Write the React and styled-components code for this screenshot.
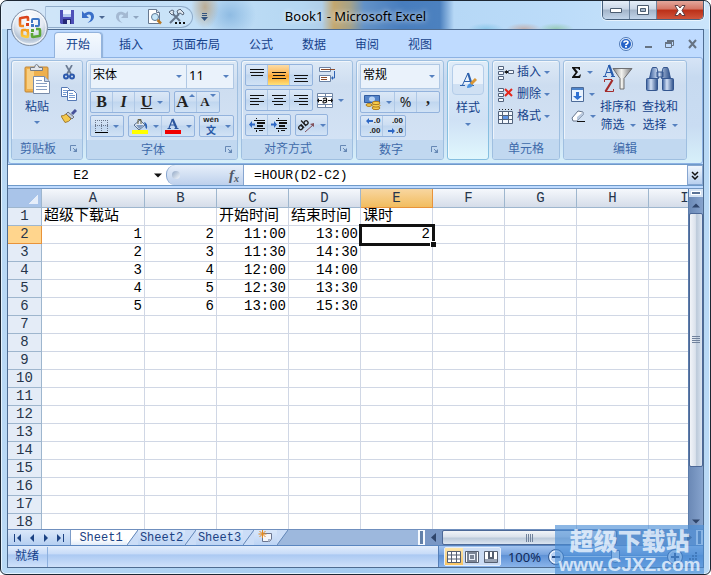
import React from 'react';
import styled, { createGlobalStyle, css } from 'styled-components';

const Global = createGlobalStyle`
  * { box-sizing: border-box; }
  html, body { margin: 0; padding: 0; background: #fff; }
  button, input, select { font: inherit; color: inherit; margin: 0; padding: 0; border: 0; background: none; border-radius: 0; }
  button { cursor: default; }
  svg { display: block; flex: none; }
`;

const cjk = '"Liberation Sans", "Noto Sans CJK SC", sans-serif';
const mono = '"Liberation Mono", "Noto Sans CJK SC", monospace';
const line = '#93b3dd';
const ink = '#15428b';

/* ---------- window frame ---------- */
const Frame = styled.div`
  position: relative;
  display: flex;
  flex-direction: column;
  height: 100vh;
  min-height: 400px;
  padding: 0 6px 6px;
  overflow: hidden;
  border: 1px solid #1d2733;
  border-radius: 7px 7px 6px 6px;
  background: linear-gradient(90deg, #b9d9f5, #a4cbf0 50%, #b9d9f5);
  box-shadow: inset 0 0 0 1px #e6f4ff;
  font: 12px/16px ${cjk};
  color: ${ink};
`;

const TitleBar = styled.header`
  display: grid;
  grid-template-columns: 1fr auto 1fr;
  flex: none;
  height: 28px;
  margin: 0 -5px;
  padding: 0 5px;
  border-radius: 6px 6px 0 0;
  background:
    radial-gradient(ellipse 14px 22px at 203px 6px, #b99f7bcc, #b99f7b00),
    radial-gradient(ellipse 26px 24px at 228px 14px, #83b3decc, #83b3de00),
    radial-gradient(ellipse 18px 6px at 484px 28px, #77bfe3aa, #77bfe300),
    radial-gradient(ellipse 18px 6px at 522px 28px, #c4a79dcc, #c4a79d00),
    radial-gradient(ellipse 18px 6px at 554px 28px, #86c394aa, #86c39400),
    linear-gradient(90deg, #dcebf9 0, #c3dff7 120px, #c3e0f8 185px, #b5d7f2 300px, #b0cfe9 320px, #c4a76e 332px, #a5a289 348px, #6292c8 362px, #477dbe 400px, #4c81bf 438px, #b6d8f6 452px, #bcdcf9 560px, #cbe5fb 100%);
`;

const QuickAccess = styled.div`
  display: flex;
  align-items: center;
  justify-self: start;
  height: 22px;
  margin: 5px 0 0 38px;
  padding: 0 7px 0 13px;
  border: 1px solid #8fabc9;
  border-left-color: #a9c1dc;
  border-radius: 0 12px 12px 0 / 0 11px 11px 0;
  background: rgba(205, 228, 249, 0.6);
`;

const QuickLine = styled.div`
  display: flex;
  gap: 7px;
`;

const IconButton = styled.button`
  display: flex;
  align-items: center;
  justify-content: center;
  flex: none;
  width: ${p => p.$w || 16}px;
  height: ${p => p.$h || 16}px;
  margin-right: ${p => p.$gap || 0}px;
`;

const Title = styled.h1`
  margin: 0;
  padding-top: 6px;
  font: 13px/18px "Noto Sans", sans-serif;
  color: #000;
  text-shadow: 0 0 5px rgba(255, 255, 255, 0.8), 0 0 8px rgba(255, 255, 255, 0.5);
`;

const WindowButtons = styled.div`
  display: flex;
  justify-self: end;
  height: 19px;
  overflow: hidden;
  border: 1px solid #47607c;
  border-top: 0;
  border-radius: 0 0 5px 5px;
  box-shadow: 0 0 0 1px rgba(255, 255, 255, 0.6);
`;

const WindowButton = styled.button`
  display: flex;
  align-items: center;
  justify-content: center;
  width: ${p => (p.$close ? 46 : 27)}px;
  border-right: 1px solid #6d849f;
  background: ${p =>
    p.$close
      ? 'linear-gradient(#e3a79c, #d47565 45%, #bb2f17 50%, #d0553c)'
      : 'linear-gradient(#e6eff9, #c9d6e6 45%, #a3b4c9 50%, #c2d5ea)'};
  &:last-child { border-right: 0; }
`;

const Orb = styled.button`
  position: absolute;
  left: 10px;
  top: 8px;
  z-index: 2;
`;

const AppBody = styled.main`
  display: flex;
  flex-direction: column;
  flex: 1;
  min-height: 0;
  border: 1px solid #4e6c91;
  background: #bfdbff;
`;

/* ---------- ribbon ---------- */
const TabRow = styled.nav`
  display: flex;
  align-items: flex-end;
  flex: none;
  gap: 5px;
  height: 27px;
  padding: 0 3px 0 46px;
`;

const RibbonTab = styled.button`
  height: 25px;
  padding: 0 11px 1px;
  border: 1px solid transparent;
  border-bottom: 0;
  border-radius: 4px 4px 0 0;
  color: ${ink};
  ${p => p.$on && css`
    position: relative;
    z-index: 1;
    margin-bottom: -1px;
    height: 26px;
    border-color: #93b3dd;
    background: linear-gradient(#f5f9fe, #e3eefb);
    box-shadow: 1px 0 1px #8fb0d8;
  `}
`;

const DocButtons = styled.div`
  display: flex;
  gap: 6px;
  margin-left: auto;
  padding-bottom: 5px;
`;

const RibbonPanel = styled.div`
  display: flex;
  flex: none;
  gap: 3px;
  height: 107px;
  padding: 2px 2px 3px;
  border: 1px solid #8db2e3;
  border-radius: 3px;
  background: linear-gradient(#d6e4f6, #c7daf0 18%, #c9dcf2 65%, #d7f0fa);
`;

const GroupBox = styled.section`
  display: flex;
  flex-direction: column;
  flex: none;
  width: ${p => p.$w}px;
  overflow: hidden;
  border: 1px solid ${p => (p.$plain ? '#86bfe0' : '#9fbfe0')};
  border-radius: 3px;
  background: ${p => p.$plain ? 'linear-gradient(#dfecf8, #cfe1f5 60%, #e0f7fd)' : 'linear-gradient(#dde9f6, #cdddf0 25%, #d5e4f6)'};
  box-shadow: inset 1px 1px 0 rgba(255, 255, 255, 0.6);
`;

const GroupBody = styled.div`
  display: flex;
  flex: 1;
  flex-direction: ${p => (p.$row ? 'row' : 'column')};
  gap: 2px;
  padding: 3px;
`;

const GroupLabel = styled.div`
  display: flex;
  flex: none;
  align-items: center;
  height: 20px;
  padding: 0 4px;
  background: #c1d8f0;
  color: #3e6aaa;
`;

const LabelText = styled.span`
  flex: 1;
  text-align: center;
  white-space: nowrap;
  padding-right: ${p => (p.$end ? 10 : 0)}px;
`;

const Controls = styled.div`
  display: flex;
  align-items: center;
  gap: 4px;
`;

const Strip = styled.div`
  display: flex;
  flex: none;
  height: 22px;
  overflow: hidden;
  border: 1px solid ${line};
  border-radius: 2px;
  background: linear-gradient(#dbe8f7, #cddef2 45%, #c0d6ef 50%, #d1e2f5);
`;

const StripButton = styled.button`
  display: flex;
  align-items: center;
  justify-content: center;
  gap: 5px;
  width: ${p => p.$w || 22}px;
  padding-bottom: ${p => p.$lift || 0}px;
  border-right: 1px solid #afc8e6;
  color: #222;
  font: ${p => p.$font || 'bold 16px/18px "Liberation Serif", serif'};
  background: ${p => (p.$on ? 'linear-gradient(#fbdca6, #fdb654 45%, #fba42f 55%, #fee27c)' : 'none')};
  &:last-child { border-right: 0; }
`;

const ComboWrap = styled.label`
  display: flex;
  flex: none;
  align-items: center;
  width: ${p => p.$w}px;
  height: 25px;
  padding-right: 4px;
  border: 1px solid #b0c8e4;
  background: #eaf2fb;
  & + & { margin-left: -5px; }
`;

const Combo = styled.select`
  flex: 1;
  min-width: 0;
  height: 23px;
  padding: 0 0 3px 2px;
  appearance: none;
  outline: 0;
  color: #000;
  font: ${p => (p.$num ? '13px "Noto Sans", sans-serif' : `12px ${cjk}`)};
`;

const BigButton = styled.button`
  display: flex;
  flex-direction: column;
  align-items: center;
  flex: none;
  width: ${p => p.$w}px;
  gap: ${p => p.$gap || 0}px;
  line-height: 17px;
`;

const Framed = styled.span`
  display: flex;
  align-items: center;
  justify-content: center;
  width: 32px;
  height: 31px;
  border: 1px solid #b4cde9;
  border-radius: 4px;
  background: linear-gradient(#eaf2fb 65%, #cfe0f3 66%);
`;

const Column = styled.div`
  display: flex;
  flex-direction: column;
  flex: none;
  gap: ${p => p.$gap || 0}px;
  padding: ${p => p.$pad || '0'};
`;

const LineButton = styled.button`
  display: flex;
  align-items: center;
  flex: none;
  gap: 3px;
  height: 16px;
`;

const WithArrow = styled.span`
  display: flex;
  align-items: center;
  gap: 5px;
`;

/* ---------- formula bar ---------- */
const FormulaBar = styled.div`
  display: flex;
  flex: none;
  height: 22px;
  border: 1px solid #6f9ac9;
  border-width: 1px 0;
  background: #fff;
  font: 13px/18px ${mono};
  color: #000;
`;

const NameBox = styled.label`
  display: flex;
  align-items: center;
  width: 158px;
  padding-right: 4px;
`;

const TextInput = styled.input`
  flex: 1;
  min-width: 0;
  height: 20px;
  padding-left: ${p => p.$pad}px;
  outline: 0;
  text-align: ${p => (p.$center ? 'center' : 'left')};
`;

const FxArea = styled.div`
  display: flex;
  align-items: center;
  justify-content: space-between;
  width: 78px;
  padding: 0 4px 0 5px;
  border: 1px solid #86a5d0;
  border-width: 0 1px;
  border-radius: 9px 0 0 9px;
  background: linear-gradient(#e7effa, #bdd0ec);
`;

const Knob = styled.span`
  width: 8px;
  height: 8px;
  border-radius: 50%;
  background: linear-gradient(135deg, #93a9c6, #f4f8fd);
`;

const FxButton = styled.button`
  font: italic bold 15px/17px "Liberation Serif", serif;
  color: #505a68;
  sub { font-size: 10px; line-height: 1px; vertical-align: -2px; }
`;

const ExpandButton = styled.button`
  display: flex;
  align-items: center;
  justify-content: center;
  width: 16px;
  border: 1px solid #86a5d0;
  background: linear-gradient(#f0f6fd, #b8cfee);
`;

/* ---------- sheet ---------- */
const SheetArea = styled.div`
  display: flex;
  flex: 1;
  min-height: 0;
  margin-top: 2px;
  border-top: 1px solid #7296c2;
  background: #fff;
`;

const GridView = styled.div`
  flex: 1;
  min-width: 0;
  overflow: hidden;
`;

const Sheet = styled.table`
  table-layout: fixed;
  width: 713px;
  border-spacing: 0;
  font: 14px/17px ${mono};
  color: #000;
  th, td {
    height: 18px;
    padding: 0 2px;
    border: 1px solid #d0d7e5;
    border-width: 0 1px 1px 0;
    overflow: hidden;
    white-space: nowrap;
  }
`;

const HeadCell = styled.th`
  && {
    height: ${p => (p.$row ? 18 : 19)}px;
    padding: ${p => (p.$row ? 0 : 1)}px 0 0;
    text-align: center;
    font-weight: normal;
    color: #26354a;
    border-color: ${p => (p.$on ? '#e8933a' : '#9eb6ce')};
    background: ${p =>
      p.$on
        ? p.$row ? '#ffd58d' : 'linear-gradient(#f8d6a0, #f2bd5f)'
        : p.$row ? '#e4ecf7' : 'linear-gradient(#f5f8fc, #d5dde9)'};
  }
`;

const Corner = styled.th`
  && {
    padding: 0;
    border-color: #9eb6ce;
    background: linear-gradient(135deg, transparent 50%, #e6eefa 50%) 20px 5px / 10px 10px no-repeat, #a9c4e9;
  }
`;

const Cell = styled.td`
  && {
    text-align: ${p => (p.$text ? 'left' : 'right')};
    font-size: ${p => (p.$text ? 15 : 14)}px;
    line-height: 17px;
    ${p => p.$on && css`
      position: relative;
      overflow: visible;
      outline: 3px solid #111;
      outline-offset: -1px;
    `}
  }
`;

const FillHandle = styled.span`
  position: absolute;
  right: -4px;
  bottom: -4px;
  width: 6px;
  height: 6px;
  border: 1px solid #fff;
  border-width: 1px 0 0 1px;
  background: #111;
`;

const VScroll = styled.div`
  display: flex;
  flex-direction: column;
  flex: none;
  width: 15px;
  border-left: 1px solid #5b7cab;
  background: linear-gradient(90deg, #6b89b6, #86a3cd);
`;

const SplitV = styled.button`
  flex: none;
  height: 8px;
  border: 2px solid #d5e3f4;
  background: #5a7296;
  box-shadow: inset 0 0 0 1px #fff;
`;

const ScrollButton = styled.button`
  display: flex;
  align-items: center;
  justify-content: center;
  flex: none;
  width: ${p => p.$w || 14}px;
  height: ${p => p.$h || 16}px;
`;

const Thumb = styled.div`
  display: flex;
  align-items: center;
  justify-content: center;
  flex: ${p => p.$grow} 1 0;
  border: 1px solid #4c6897;
  border-radius: 2px;
  background: linear-gradient(${p => (p.$v ? '90deg' : '180deg')}, #f1f4f8, #dbe2ec 45%, #bccada 55%, #dce5f1);
`;

const Space = styled.div`
  flex: ${p => p.$grow} 1 0;
`;

const SheetBar = styled.div`
  display: flex;
  flex: none;
  height: 16px;
  border-top: 1px solid #6f8fbe;
  background: #9db8dd;
`;

const SheetNav = styled.div`
  display: flex;
  align-items: center;
  justify-content: space-around;
  width: 63px;
  padding: 0 2px;
  border-right: 1px solid #7d9cc8;
  background: linear-gradient(#dbe8fa, #b5cff1);
`;

const SheetTab = styled.button`
  flex: none;
  width: 47px;
  height: 15px;
  padding-top: 1px;
  font: 12px/14px ${mono};
  color: #1c4283;
  background: ${p => (p.$on ? 'linear-gradient(#fff 60%, #e1ebf8)' : 'linear-gradient(#d9e7fa, #bdd4f4)')};
  ${p => p.$on && 'width: 56px; padding-left: 4px;'}
`;

const NewTab = styled.button`
  display: flex;
  justify-content: center;
  width: 23px;
  background: linear-gradient(#d9e7fa, #bdd4f4);
`;

const HScroll = styled.div`
  display: flex;
  width: 40%;
  background: #7997c5;
`;

const SplitH = styled.button`
  width: 7px;
  border: 2px solid #f5f9fe;
  border-width: 1px 2px;
  background: #6180a9;
`;

/* ---------- status bar ---------- */
const StatusBar = styled.footer`
  display: flex;
  align-items: center;
  flex: none;
  height: 22px;
  border-top: 1px solid #5a86c0;
  background: linear-gradient(#e2edfc, #c7dbf8 38%, #abc9f2 42%, #cfe1fa);
`;

const Ready = styled.div`
  height: 20px;
  width: 40px;
  padding-left: 7px;
  line-height: 19px;
  border-right: 1px solid #8db0de;
`;

const StatusRight = styled.div`
  display: flex;
  align-items: center;
  height: 21px;
  width: 265px;
  margin-left: auto;
  padding-left: 5px;
  border-left: 1px solid #557fb8;
  background: linear-gradient(#a3c4f0, #78a4df 40%, #5f92d6 45%, #8ab4ea);
`;

const ViewButtons = styled.div`
  display: flex;
  width: 57px;
  height: 19px;
  border: 1px solid #e5effc;
  border-radius: 2px;
  background: #cbdcf4;
`;

const ViewButton = styled.button`
  display: flex;
  flex: 1;
  align-items: center;
  justify-content: center;
  background: ${p => (p.$on ? 'linear-gradient(#fde6ac, #f9c45f)' : 'none')};
`;

const Percent = styled.button`
  width: 47px;
  font: 13px/18px "Noto Sans", sans-serif;
  color: #10295a;
`;

const Slider = styled.input`
  appearance: none;
  flex: 1;
  min-width: 0;
  height: 18px;
  background: linear-gradient(#dceafb, #dceafb) center / 100% 1px no-repeat;
  &::-webkit-slider-thumb {
    appearance: none;
    width: 9px;
    height: 13px;
    border: 1px solid #3f68a4;
    border-radius: 1px 1px 5px 5px;
    background: #e3eefb;
  }
`;

const Watermark = styled.div`
  position: absolute;
  right: 6px;
  bottom: -1px;
  z-index: 3;
  width: 149px;
  height: 50px;
  background: rgba(75, 143, 215, 0.64);
  color: rgba(240, 247, 255, 0.8);
  text-align: center;
  white-space: nowrap;
  pointer-events: none;
`;

const MarkName = styled.div`
  font: 900 24px/30px "Noto Sans CJK SC", sans-serif;
`;

const MarkSite = styled.div`
  font: bold 19px/20px "Liberation Sans", sans-serif;
`;

/* ---------- icons ---------- */
const arrowPaths = { down: 'M0 1h6L3 4z', up: 'M0 4h6L3 1z' };
const Arrow = ({ color = '#5580bf', dir = 'down', w = 6 }) => (
  <svg width={w} height={w === 6 ? 5 : 7} viewBox="0 0 6 5"><path fill={color} d={arrowPaths[dir]} /></svg>
);
const Launcher = () => (
  <svg width="8" height="8" viewBox="0 0 8 8" fill="none" stroke="#6688b5"><path d="M.5 6V.5H6" /><path d="M3 3l3 3" /><path fill="#6688b5" stroke="none" d="M7 3v4H3z" /></svg>
);
const OfficeLogo = () => (
  <svg width="37" height="37" viewBox="0 0 37 37">
    <defs>
      <radialGradient id="orb" cx=".5" cy=".25" r=".8"><stop offset="0" stopColor="#fff" /><stop offset=".5" stopColor="#e4eaf2" /><stop offset=".75" stopColor="#b6c4d6" /><stop offset="1" stopColor="#eef6ff" /></radialGradient>
      <linearGradient id="lo" x2="0" y2="1"><stop stopColor="#d9401c" /><stop offset="1" stopColor="#f58a20" /></linearGradient>
      <linearGradient id="ly" x2="0" y2="1"><stop stopColor="#f39a22" /><stop offset="1" stopColor="#fccb3a" /></linearGradient>
    </defs>
    <circle cx="18.500" cy="18.500" r="18" fill="url(#orb)" stroke="#7d8ea5" />
    <circle cx="18.500" cy="18.500" r="16.500" fill="none" stroke="#fff" opacity=".8" />
    <g fill="none" strokeWidth="2.600" strokeLinejoin="round">
      <path stroke="url(#lo)" d="M17 12V9q0-1-1-1l-6 1q-1 0-1 1v6q0 1 1 1h3" />
      <path stroke="#3f77c4" strokeWidth="2" d="M21 14v-3q0-1 1-1h5q1 0 1 1v5q0 1-1 1h-3" />
      <path stroke="url(#ly)" d="M17 23v4q0 1-1 1l-4-1q-1 0-1-1v-4q0-1 1-1h3" />
      <path stroke="#5ba637" d="M21 24v3q0 1 1 1l6-1q1 0 1-1v-5q0-1-1-1h-3" />
    </g>
    <g fill="#d9401c"><path d="M15 14h3v3h-3z" /><path fill="#3f77c4" d="M20 15h3v3h-3z" /><path fill="#f5a623" d="M15 20h3v3h-3z" /><path fill="#5ba637" d="M20 20h3v3h-3z" /></g>
  </svg>
);
const Save = () => (
  <svg width="14" height="14" viewBox="0 0 14 14"><path fill="#4d50b8" d="M0 0h14v14H1l-1-1z" /><path fill="#e9f2ff" d="M3 0h8v7H3z" /><path fill="#b4c9ee" d="M3 4h8v3H3z" /><path fill="#242877" d="M3 9h8v5H3z" /><path fill="#dde7f8" d="M7 10h3v4H7z" /></svg>
);
const Undo = ({ color = '#3a6fc8', flip }) => (
  <svg width="14" height="14" viewBox="0 0 14 14"><g transform={flip ? 'translate(14 0) scale(-1 1)' : undefined}><path fill={color} d="M1 1v7h7L5.500 5.500C8 3.500 10.500 4.500 10 8c-.3 2-1.500 3.500-3.500 5C10 12 13 10 13 6.500 13 1.500 7.500.5 3.500 3.500z" /></g></svg>
);
const Preview = () => (
  <svg width="15" height="16" viewBox="0 0 15 16"><path fill="#fff" stroke="#68798f" d="M1.500.5h8l3 3v11h-11z" /><path stroke="#68798f" fill="#d6e4f4" d="M9.500.5v3h3" /><circle cx="8" cy="8" r="3.500" fill="#c6e6f9" stroke="#5f7a96" /><path stroke="#b87925" strokeWidth="2.500" d="M10.500 11l3.500 3.500" /></svg>
);
const Tools = () => (
  <svg width="17" height="16" viewBox="0 0 17 16"><path stroke="#65758a" strokeWidth="2" d="M4 4l8 8M11 5L2 14" fill="none" /><path fill="#dfe7ef" stroke="#566478" d="M1 3l3-2 2 1-1 2 1 1-2 1zM9 2l3-2 4 4-1 2-3-2-2 1z" /><path fill="#111" d="M7 13h2v2H7zM11 13h2v2h-2zM15 13h2v2h-2z" /></svg>
);
const Customize = () => (
  <svg width="7" height="8" viewBox="0 0 7 8" fill="#33537f"><path d="M1 0h5v1H1zM1 2h5v1H1zM0 4h7L3.500 8z" /></svg>
);
const Minimize = () => <svg width="12" height="5" viewBox="0 0 12 5"><path fill="#fff" stroke="#4b5c70" d="M.5.5h11v4H.5z" /></svg>;
const Maximize = () => <svg width="12" height="10" viewBox="0 0 12 10" fill="#fff" stroke="#4b5c70"><path d="M.5.5h11v9H.5z" /><path fill="#a9b9cc" d="M3.500 3.500h5v3h-5z" /></svg>;
const CloseMark = () => <svg width="12" height="11" viewBox="0 0 12 11"><path fill="#fff" stroke="#5d4045" d="M1 .5h3l2 2.500 2-2.500h3L8 5.500l3 5H8L6 8l-2 2.500H1l3-5z" /></svg>;
const Help = () => (
  <svg width="14" height="14" viewBox="0 0 14 14"><circle cx="7" cy="7" r="6.500" fill="#dcecff" stroke="#5079b5" /><circle cx="7" cy="7" r="5" fill="#2462c7" /><path fill="none" stroke="#fff" strokeWidth="1.600" d="M5 5.500Q5 4 7 4t2 1.500Q9 6.500 7 7.500v.7" /><path fill="#fff" d="M6 9h2v1.500H6z" /></svg>
);
const DocMin = () => <svg width="9" height="12" viewBox="0 0 9 12"><path fill="#667383" d="M1 8h7v2H1z" /></svg>;
const DocRestore = () => <svg width="10" height="12" viewBox="0 0 10 12" fill="none" stroke="#667383"><path d="M.5 4.500h6v5h-6zM2.500 4V2.500h6v5H7" /><path strokeWidth="2" d="M0 5h7M2 3h7" /></svg>;
const DocClose = () => <svg width="9" height="12" viewBox="0 0 9 12"><path stroke="#667383" strokeWidth="2" d="M1 2l7 8M8 2l-7 8" /></svg>;
const Paste = () => (
  <svg width="27" height="31" viewBox="0 0 27 31"><rect x="1" y="3" width="23" height="25" rx="1" fill="#eeb04d" stroke="#bf8536" /><path fill="#f8cf83" d="M3 5h7v20H3z" /><path fill="#e1e5eb" stroke="#747b86" d="M6.500 6.500V3.500h4Q11 .5 12.500.5T15 3.500h3.500v3z" /><path fill="#fff" stroke="#788ba9" d="M9.500 12.500h11l5 5v12h-16z" /><path fill="#c6d5ea" stroke="#788ba9" d="M20.500 12.500v5h5" /><path stroke="#8aa0c3" d="M12 16.500h6M12 19.500h11M12 22.500h11M12 25.500h11" /></svg>
);
const Cut = () => (
  <svg width="12" height="15" viewBox="0 0 12 15" fill="none"><path stroke="#6c7c94" strokeWidth="1.700" d="M3 0l5 9M9 0L4 9" /><circle cx="3" cy="11.500" r="2" stroke="#2c59ad" strokeWidth="2" /><circle cx="9" cy="11.500" r="2" stroke="#2c59ad" strokeWidth="2" /></svg>
);
const Copy = () => (
  <svg width="16" height="14" viewBox="0 0 16 14" fill="#fff" stroke="#5579b5"><path d="M.5.5h6l2 2v7h-8z" /><path d="M6.500 3.500h6l3 3v7h-9z" /><path stroke="#769bd0" d="M2 3.500h4M2 5.500h4M2 7.500h3M8 6.500h4M8 8.500h6M8 10.500h6" /></svg>
);
const Painter = () => (
  <svg width="16" height="14" viewBox="0 0 16 14"><path stroke="#47529a" strokeWidth="3" d="M15 1l-4 4" /><path fill="#c8ceda" stroke="#6d7480" d="M7 3l6 5-2 2-6-5z" /><path fill="#f4c94d" stroke="#a37b2e" d="M5 5l5 5q-2 3-6 3.500L0 7q3 0 5-2z" /></svg>
);
const Border = () => (
  <svg width="13" height="13" viewBox="0 0 13 13"><path stroke="#69758a" fill="none" strokeDasharray="1 1" d="M0 .5h13M.5 0v11M6.500 0v11M12.500 0v11M0 5.500h13" /><path fill="#000" d="M0 12h13v1H0z" /></svg>
);
const Bucket = () => (
  <svg width="16" height="16" viewBox="0 0 16 16"><path fill="#dfe9f6" stroke="#59708f" d="M2 7l6-5 5 5-6 5z" /><path fill="#7f9bc1" d="M4 7h8l-5 4z" /><path fill="none" stroke="#6b6240" d="M6 6V1.500h3V6" /><path fill="#2d63b5" d="M12 4q4 1 3 7-2-1-2-4z" /><path fill="#ff0" d="M0 12h16v4H0z" /></svg>
);
const FontColor = () => (
  <svg width="16" height="16" viewBox="0 0 16 16"><path fill="none" stroke="#2a559d" strokeWidth="2.200" d="M7.500 1l4 9" /><path fill="none" stroke="#2a559d" strokeWidth="1.200" d="M7.500 1L4 10M5.500 7h5M2.500 10.500h3.500M9.500 10.500h4" /><path fill="#f00000" d="M0 12h16v4H0z" /></svg>
);
const Pinyin = styled.span`
  display: flex;
  flex-direction: column;
  width: 17px;
  font: bold 8px/8px "Liberation Sans", sans-serif;
  align-items: center;
  b { font: bold 10px/12px "Noto Sans CJK SC", sans-serif; color: #285aa8; }
`;
const SizeMark = styled.span`
  display: flex;
  align-items: flex-start;
  font-size: ${p => p.$s}px;
`;
const alignRows = {
  top: [[1, 14], [4, 14], [7, 12]], middle: [[4, 14], [7, 12], [10, 14]], bottom: [[7, 14], [10, 12], [13, 14]],
  left: [[2, 14], [5, 9], [8, 14], [11, 9]], center: [[2, 14], [5, 9], [8, 14], [11, 9]], right: [[2, 14], [5, 9], [8, 14], [11, 9]],
};
const Align = ({ kind }) => (
  <svg width="14" height="15" viewBox="0 0 14 15" fill="#111">
    {alignRows[kind].map(([y, w]) => <rect key={y} x={kind === 'left' ? 0 : kind === 'right' ? 14 - w : Math.floor((14 - w) / 2)} y={y} width={w} height={1} />)}
  </svg>
);
const Indent = ({ right }) => (
  <svg width="16" height="14" viewBox="0 0 16 14"><path fill="#111" d="M7 0h1v1H7zM5 2h11v1H5zM8 4h8v2H8zM8 7h6v2H8zM5 10h11v1H5zM7 12h1v2H7zM10 12h4v1h-4z" /><path fill="#2c66c4" d={right ? 'M6 6.500L3 3v2.500H0v2h3V10z' : 'M0 6.500L3 3v2.500h3v2H3V10z'} /></svg>
);
const Wrap = () => (
  <svg width="17" height="16" viewBox="0 0 17 16"><path fill="#fff" stroke="#6a82a5" d="M.5.5h11v4H.5zM.5 8.500h11v6H.5z" /><path stroke="#8b4c2d" d="M2 2.500h14M2 10.500h6M2 12.500h6" /><path fill="none" stroke="#2d62b2" d="M15.500 4v7h-2" /><path fill="#2d62b2" d="M14 9v4l-2-2z" /></svg>
);
const Merge = () => (
  <svg width="16" height="15" viewBox="0 0 16 15"><path fill="#fff" stroke="#7187a7" d="M.5.5h15v14H.5zM0 3.500h16M0 11.500h16M8.500 0v3M8.500 12v3" /><path stroke="#111" d="M1 7.500h4M11 7.500h4" /><path fill="#111" d="M0 7.500L2 5v5zM16 7.500L14 5v5z" /><path fill="none" stroke="#111" strokeWidth="1.200" d="M6 6q3-2 3.500 0v3.500M9 7.500Q6 7 6 9t3.500 0" /></svg>
);
const Orient = () => (
  <svg width="17" height="15" viewBox="0 0 17 15" fill="none"><g transform="rotate(-42 6 8)" stroke="#222" strokeWidth="1.300"><circle cx="2.500" cy="7" r="2" /><path d="M4.800 4.500v5M7.500 2v7.500" /><circle cx="9.700" cy="7" r="2" /></g><path stroke="#82515b" d="M7 14L15 7" /><path fill="#82515b" d="M16 5v4l-4-3z" /></svg>
);
const Currency = () => (
  <svg width="17" height="17" viewBox="0 0 17 17"><path fill="#5484c9" stroke="#315ca0" d="M.5 1.500h15v7H.5z" /><ellipse cx="8" cy="5" rx="3" ry="2.500" fill="#b6d2f4" /><g fill="#f9cf4e" stroke="#ad7c20"><ellipse cx="12" cy="14" rx="4" ry="1.600" /><ellipse cx="12" cy="11.500" rx="4" ry="1.600" /><ellipse cx="12" cy="9" rx="4" ry="1.600" /><ellipse cx="5" cy="11" rx="3" ry="1.400" /></g></svg>
);
const DecimalBox = styled.span`
  display: flex;
  flex-direction: column;
  align-items: flex-end;
  width: 18px;
  font: bold 8px/10px "Liberation Sans", sans-serif;
  i { display: flex; align-items: center; gap: 1px; font-style: normal; }
`;
const TinyArrow = ({ right }) => (
  <svg width="7" height="6" viewBox="0 0 7 6"><path fill="#2c66c4" d={right ? 'M7 3L4 0v2H0v2h4v2z' : 'M0 3l3-3v2h4v2H3v2z'} /></svg>
);
const Styles = () => (
  <svg width="18" height="18" viewBox="0 0 18 18"><path fill="none" stroke="#2e62ad" strokeWidth="2.200" d="M9 2l4 12" /><path stroke="#2e62ad" fill="none" d="M9 2L3.500 14M5 10.500h7M1 14.500h5M10 14.500h5" /><path fill="#4b93e0" d="M8 17q0-4 4-5l2 2q-1 3-6 3z" /><path stroke="#d99635" strokeWidth="3" d="M12 13l5-5" /></svg>
);
const CellOp = ({ kind }) => (
  <svg width="16" height="15" viewBox="0 0 16 15" fill="#f4f8fe" stroke="#52637d">
    {kind === 'format' ? (
      <><path d="M.5 2.500h14v12H.5zM4.500 2v12M10.500 2v12M0 6.500h15M0 10.500h15" /><path fill="#5c93e5" stroke="none" d="M5 7h5v3H5z" /><path stroke="#222" strokeDasharray="1 2" d="M1 .5h14" /></>
    ) : (
      <><path d="M.5 1.500h5v3h-5zM.5 6.500h5v3h-5zM.5 11.500h5v3h-5z" />
        {kind === 'insert'
          ? <><path d="M10.500 5.500h5v3h-5z" /><path fill="#111" stroke="none" d="M6 7l3-2v1h1v2H9v1z" /></>
          : <path stroke="#e3271c" strokeWidth="2" d="M7 2l7 7M14 2L7 9" />}</>
    )}
  </svg>
);
const Sigma = () => <svg width="11" height="11" viewBox="0 0 11 11"><path fill="#111" d="M1 0h8v3H8Q8 1.500 6.500 1.500H4L7 5 4 9h2.500Q8.500 9 9 7.500h1L9 11H1v-1l3.500-4.500L1 1z" /></svg>;
const Fill = () => <svg width="13" height="15" viewBox="0 0 13 15"><path fill="#e9f3fe" stroke="#4d6b98" d="M.5.5h12v14H.5z" /><path fill="#4f85cb" d="M1 1h11v2H1z" /><path fill="#2f71d2" d="M5 5h3v4h3l-4.500 4L2 9h3z" /></svg>;
const Eraser = () => <svg width="14" height="12" viewBox="0 0 14 12"><path fill="#fff" stroke="#66758c" d="M1 8l6-7 5 1v3l-6 6H2z" /><path fill="#b9c9de" d="M6 7l6-5v3l-6 6z" /><path fill="#111" d="M6 11h8v1H6z" /></svg>;
const SortFilter = () => (
  <svg width="30" height="34" viewBox="0 0 30 34"><defs><linearGradient id="fun"><stop stopColor="#848484" /><stop offset=".45" stopColor="#f2f2ee" /><stop offset="1" stopColor="#77777a" /></linearGradient></defs><path fill="none" stroke="#275cad" strokeWidth="2.200" d="M6 1l4 11" /><path fill="none" stroke="#275cad" d="M6 1L2 12M3 8.500h6M0 12.500h4M8 12.500h4" /><path fill="none" stroke="#a32b2b" d="M1.500 18v-2.500H9M2 27.500h8.500V25" /><path stroke="#a32b2b" strokeWidth="2.200" d="M9.500 16L2.500 27.500" /><path fill="url(#fun)" stroke="#6f7073" d="M10 4.500h19l-8 10V25h-4V14.500z" /></svg>
);
const Find = () => (
  <svg width="28" height="34" viewBox="0 -2 28 34"><defs><linearGradient id="bin"><stop stopColor="#385e9c" /><stop offset=".4" stopColor="#d2e0f5" /><stop offset="1" stopColor="#2c4f89" /></linearGradient></defs><g fill="url(#bin)" stroke="#34568f"><path d="M5.500 3.500l1-2h4l1 2 1 9h-9zM16.500 3.500l1-2h4l1 2 2 9h-9z" /><path d="M11 6h6v5h-6z" /><rect x=".5" y="12.500" width="11" height="12" rx="1" /><rect x="16.500" y="12.500" width="11" height="12" rx="1" /></g></svg>
);
const navPaths = ['M0 1h1v8H0zM7 1v8L3 5z', 'M6 1v8L2 5z', 'M1 1v8l4-4z', 'M0 1v8l4-4zM6 1h1v8H6z'];
const NavMark = ({ d }) => <svg width="7" height="9" viewBox="0 0 7 9"><path fill="#1c4283" d={d} /></svg>;
const Slant = ({ left, right }) => (
  <svg width="11" height="15" viewBox="0 0 11 15"><path fill={left} d="M0 0h11L0 15z" /><path fill={right} d="M11 0v15H0z" /><path stroke="#6487b8" d="M0 15L11 0" /></svg>
);
const NewSheet = () => <svg width="15" height="13" viewBox="0 0 15 13"><path fill="#f4f6fa" stroke="#6c7690" d="M4.500 3.500h9v6l-2 2h-7z" /><path fill="#aab4c9" d="M10 12V9h4z" /><path stroke="#e58a1f" d="M4.500 0v8M.5 4h8M1.500 1l6 6M7.500 1l-6 6" /></svg>;
const Chevrons = () => <svg width="8" height="9" viewBox="0 0 8 9"><path fill="none" stroke="#111" strokeWidth="1.500" d="M1 1l3 3 3-3M1 5l3 3 3-3" /></svg>;
const Grip = ({ v }) => <svg width="8" height="8" viewBox="0 0 8 8"><path stroke="#71829c" d={v ? 'M0 .5h8M0 2.500h8M0 4.500h8M0 6.500h8' : 'M.5 0v8M2.500 0v8M4.500 0v8M6.500 0v8'} /></svg>;
const SideArrow = ({ right }) => <svg width="5" height="9" viewBox="0 0 5 9"><path fill="#2f456b" d={right ? 'M0 0v9l5-4.500z' : 'M5 0v9L0 4.500z'} /></svg>;
const ViewIcon = ({ kind }) => (
  <svg width="14" height="12" viewBox="0 0 14 12"><path fill="#fff" stroke="#555f70" d="M.5.5h13v11H.5z" />{kind === 0 && <path stroke="#555f70" d="M0 4h14M0 8h14M4.500 0v12M9.500 0v12" />}{kind === 1 && <path fill="#e8eef8" stroke="#7b8596" strokeWidth="2" d="M3 2h8v8H3zM5 5h4M5 7h4" />}{kind === 2 && <><path fill="#9ba5b5" d="M1 8h12v3H1z" /><path fill="none" stroke="#555f70" strokeWidth="2" d="M5 0v7M9 0v7H4" /></>}</svg>
);
const ZoomMark = ({ plus }) => (
  <svg width="16" height="16" viewBox="0 0 16 16"><circle cx="8" cy="8" r="7.500" fill="#b9d3f4" stroke="#33598f" /><circle cx="8" cy="8" r="6" fill="none" stroke="#fff" /><path fill="#294d85" d={plus ? 'M4 7h3V4h2v3h3v2H9v3H7V9H4z' : 'M4 7h8v2H4z'} /></svg>
);
const ResizeGrip = () => <svg width="9" height="9" viewBox="0 0 9 9" fill="#31578f"><path d="M6 0h2v2H6zM3 3h2v2H3zM6 3h2v2H6zM0 6h2v2H0zM3 6h2v2H3zM6 6h2v2H6z" /></svg>;

/* ---------- data ---------- */
const columns = ['A', 'B', 'C', 'D', 'E', 'F', 'G', 'H', 'I'];
const data = [
  ['超级下载站', '', '开始时间', '结束时间', '课时'],
  ['1', '2', '11:00', '13:00', '2'],
  ['2', '3', '11:30', '14:30'],
  ['3', '4', '12:00', '14:00'],
  ['4', '5', '12:30', '13:30'],
  ['5', '6', '13:00', '15:30'],
];
const rowCount = 18;

const Group = ({ label, launcher, w, row, children }) => (
  <GroupBox $w={w} aria-label={label}>
    <GroupBody $row={row}>{children}</GroupBody>
    <GroupLabel><LabelText $end={launcher}>{label}</LabelText>{launcher && <IconButton $w={8} $h={12} aria-label={label + '设置'}><Launcher /></IconButton>}</GroupLabel>
  </GroupBox>
);

const Ribbon = () => (
  <RibbonPanel>
    <Group label="剪贴板" w={72} row launcher>
      <BigButton $w={44} $gap={4}><Paste />粘贴<Arrow /></BigButton>
      <Column $gap={6}>
        <IconButton aria-label="剪切"><Cut /></IconButton>
        <IconButton aria-label="复制"><Copy /></IconButton>
        <IconButton aria-label="格式刷"><Painter /></IconButton>
      </Column>
    </Group>
    <Group label="字体" w={152} launcher>
      <Controls>
        <ComboWrap $w={97}><Combo aria-label="字体名称"><option>宋体</option></Combo><Arrow /></ComboWrap>
        <ComboWrap $w={48}><Combo $num aria-label="字号"><option>11</option></Combo><Arrow /></ComboWrap>
      </Controls>
      <Controls>
        <Strip>
          <StripButton aria-label="加粗">B</StripButton>
          <StripButton $font='italic bold 16px/18px "Liberation Serif", serif' aria-label="倾斜">I</StripButton>
          <StripButton $w={34} aria-label="下划线"><u>U</u><Arrow /></StripButton>
        </Strip>
        <Strip>
          <StripButton aria-label="增大字号"><SizeMark $s={17}>A<Arrow dir="up" /></SizeMark></StripButton>
          <StripButton aria-label="减小字号"><SizeMark $s={13}>A<Arrow /></SizeMark></StripButton>
        </Strip>
      </Controls>
      <Controls>
        <Strip><StripButton $w={32} aria-label="边框"><Border /><Arrow /></StripButton></Strip>
        <Strip>
          <StripButton $w={33} aria-label="填充颜色"><Bucket /><Arrow /></StripButton>
          <StripButton $w={32} aria-label="字体颜色"><FontColor /><Arrow /></StripButton>
        </Strip>
        <Strip><StripButton $w={33} aria-label="拼音"><Pinyin>wén<b>文</b></Pinyin><Arrow /></StripButton></Strip>
      </Controls>
    </Group>
    <Group label="对齐方式" w={112} launcher>
      <Column $gap={3}>
        <Controls>
          <Strip>{['top', 'middle', 'bottom'].map(k => <StripButton key={k} $on={k === 'middle'} aria-label={k}><Align kind={k} /></StripButton>)}</Strip>
          <IconButton $w={20} aria-label="自动换行"><Wrap /></IconButton>
        </Controls>
        <Controls>
          <Strip>{['left', 'center', 'right'].map(k => <StripButton key={k} aria-label={k}><Align kind={k} /></StripButton>)}</Strip>
          <LineButton aria-label="合并后居中"><WithArrow><Merge /><Arrow /></WithArrow></LineButton>
        </Controls>
        <Controls>
          <Strip><StripButton aria-label="减少缩进量"><Indent /></StripButton><StripButton aria-label="增加缩进量"><Indent right /></StripButton></Strip>
          <Strip><StripButton $w={31} aria-label="方向"><Orient /><Arrow /></StripButton></Strip>
        </Controls>
      </Column>
    </Group>
    <Group label="数字" w={88} launcher>
      <Controls><ComboWrap $w={80}><Combo aria-label="数字格式"><option>常规</option></Combo><Arrow /></ComboWrap></Controls>
      <Strip>
        <StripButton $w={34} aria-label="会计数字格式"><Currency /><Arrow /></StripButton>
        <StripButton $w={22} $font='14px/18px "Noto Sans", sans-serif'>%</StripButton>
        <StripButton $w={22} $lift={6}>,</StripButton>
      </Strip>
      <Controls>
        <Strip>
          <StripButton aria-label="增加小数位数"><DecimalBox><i><TinyArrow />.0</i><i>.00</i></DecimalBox></StripButton>
          <StripButton aria-label="减少小数位数"><DecimalBox><i>.00</i><i><TinyArrow right />.0</i></DecimalBox></StripButton>
        </Strip>
      </Controls>
    </Group>
    <GroupBox $w={42} $plain>
      <GroupBody><BigButton $w={34} $gap={5}><Framed><Styles /></Framed>样式<Arrow /></BigButton></GroupBody>
    </GroupBox>
    <Group label="单元格" w={68}>
      <Column $gap={6} $pad="0 2px">
        {[['insert', '插入'], ['delete', '删除'], ['format', '格式']].map(([k, t]) => (
          <LineButton key={k}><CellOp kind={k} />{t}<Arrow /></LineButton>
        ))}
      </Column>
    </Group>
    <Group label="编辑" w={124} row>
      <Column $gap={6} $pad="0 0 0 4px">
        <LineButton aria-label="求和"><WithArrow><Sigma /><Arrow /></WithArrow></LineButton>
        <LineButton aria-label="填充"><WithArrow><Fill /><Arrow /></WithArrow></LineButton>
        <LineButton aria-label="清除"><WithArrow><Eraser /><Arrow /></WithArrow></LineButton>
      </Column>
      <BigButton $w={40} $gap={1}><SortFilter />排序和<WithArrow>筛选<Arrow /></WithArrow></BigButton>
      <BigButton $w={40} $gap={1}><Find />查找和<WithArrow>选择<Arrow /></WithArrow></BigButton>
    </Group>
  </RibbonPanel>
);

const Worksheet = () => (
  <SheetArea>
    <GridView>
      <Sheet>
        <colgroup><col width="34" /><col width="103" />{columns.slice(1).map(c => <col key={c} width="72" />)}</colgroup>
        <thead><tr><Corner aria-label="全选" />{columns.map(c => <HeadCell key={c} scope="col" $on={c === 'E'}>{c}</HeadCell>)}</tr></thead>
        <tbody>
          {Array.from({ length: rowCount }, (_, r) => (
            <tr key={r}>
              <HeadCell scope="row" $row $on={r === 1}>{r + 1}</HeadCell>
              {columns.map((c, i) => {
                const active = r === 1 && c === 'E';
                return <Cell key={c} $text={r === 0} $on={active}>{data[r]?.[i]}{active && <FillHandle />}</Cell>;
              })}
            </tr>
          ))}
        </tbody>
      </Sheet>
    </GridView>
    <VScroll>
      <SplitV aria-label="拆分" />
      <ScrollButton aria-label="向上滚动"><Arrow dir="up" color="#2f456b" w={8} /></ScrollButton>
      <Thumb $v $grow={253}><Grip v /></Thumb>
      <Space $grow={46} />
      <ScrollButton aria-label="向下滚动"><Arrow color="#2f456b" w={8} /></ScrollButton>
    </VScroll>
  </SheetArea>
);

const tabTone = '#cbddf7';

export default function App() {
  return (
    <Frame>
      <Global />
      <TitleBar>
        <QuickLine>
          <QuickAccess>
            <IconButton $gap={6} $w={15} aria-label="保存"><Save /></IconButton>
            <IconButton $gap={3} aria-label="撤消"><Undo /></IconButton>
            <IconButton $gap={9} $w={6} aria-label="撤消列表"><Arrow color="#4c6892" /></IconButton>
            <IconButton $gap={3} aria-label="恢复"><Undo flip color="#a4b9d2" /></IconButton>
            <IconButton $gap={7} $w={6} aria-label="恢复列表"><Arrow color="#8fa5c0" /></IconButton>
            <IconButton $gap={6} aria-label="打印预览"><Preview /></IconButton>
            <IconButton $w={17} aria-label="工具"><Tools /></IconButton>
          </QuickAccess>
          <IconButton $w={8} $h={32} aria-label="自定义快速访问工具栏"><Customize /></IconButton>
        </QuickLine>
        <Title>Book1 - Microsoft Excel</Title>
        <WindowButtons>
          <WindowButton aria-label="最小化"><Minimize /></WindowButton>
          <WindowButton aria-label="最大化"><Maximize /></WindowButton>
          <WindowButton $close aria-label="关闭"><CloseMark /></WindowButton>
        </WindowButtons>
      </TitleBar>
      <Orb aria-label="Office 按钮"><OfficeLogo /></Orb>
      <AppBody>
        <TabRow>
          {['开始', '插入', '页面布局', '公式', '数据', '审阅', '视图'].map((t, i) => <RibbonTab key={t} $on={i === 0}>{t}</RibbonTab>)}
          <DocButtons>
            <IconButton aria-label="帮助"><Help /></IconButton>
            <IconButton aria-label="最小化工作簿"><DocMin /></IconButton>
            <IconButton aria-label="还原工作簿"><DocRestore /></IconButton>
            <IconButton aria-label="关闭工作簿"><DocClose /></IconButton>
          </DocButtons>
        </TabRow>
        <Ribbon />
        <FormulaBar>
          <NameBox><TextInput $center $pad={0} aria-label="名称框" defaultValue="E2" /><Arrow w={8} color="#111" /></NameBox>
          <FxArea><Knob /><FxButton aria-label="插入函数">f<sub>x</sub></FxButton></FxArea>
          <TextInput $pad={10} aria-label="编辑栏" defaultValue="=HOUR(D2-C2)" />
          <ExpandButton aria-label="展开编辑栏"><Chevrons /></ExpandButton>
        </FormulaBar>
        <Worksheet />
        <SheetBar>
          <SheetNav>{navPaths.map((d, i) => <ScrollButton key={d} $w={12} $h={14} aria-label={'工作表导航 ' + (i + 1)}><NavMark d={d} /></ScrollButton>)}</SheetNav>
          <SheetTab $on>Sheet1</SheetTab>
          <Slant left="#fff" right={tabTone} />
          <SheetTab>Sheet2</SheetTab>
          <Slant left={tabTone} right={tabTone} />
          <SheetTab>Sheet3</SheetTab>
          <Slant left={tabTone} right={tabTone} />
          <NewTab aria-label="插入工作表"><NewSheet /></NewTab>
          <Slant left={tabTone} right="#9db8dd" />
          <Space $grow={1} />
          <SplitH aria-label="拆分" />
          <HScroll>
            <ScrollButton $w={17} $h={15} aria-label="向左滚动"><SideArrow /></ScrollButton>
            <Thumb $grow={165}><Grip /></Thumb>
            <Space $grow={62} />
            <ScrollButton $w={14} $h={15} aria-label="向右滚动"><SideArrow right /></ScrollButton>
            <SplitH aria-label="滚动条末端" />
          </HScroll>
        </SheetBar>
        <StatusBar>
          <Ready>就绪</Ready>
          <StatusRight>
            <ViewButtons>{['普通', '页面布局', '分页预览'].map((t, i) => <ViewButton key={t} $on={i === 0} aria-label={t}><ViewIcon kind={i} /></ViewButton>)}</ViewButtons>
            <Percent>100%</Percent>
            <ZoomMark />
            <Slider type="range" min="10" max="190" defaultValue="100" aria-label="显示比例" />
            <ZoomMark plus />
            <IconButton $w={20} aria-label="调整大小"><ResizeGrip /></IconButton>
          </StatusRight>
        </StatusBar>
      </AppBody>
      <Watermark><MarkName>超级下载站</MarkName><MarkSite>www.CJXZ.com</MarkSite></Watermark>
    </Frame>
  );
}
